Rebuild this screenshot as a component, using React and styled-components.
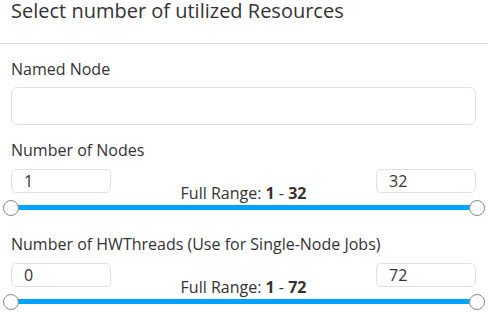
import React from "react";
import styled, { createGlobalStyle } from "styled-components";

const Global = createGlobalStyle`
  html, body { margin: 0; padding: 0; background: #fff; }
  body { font-family: "Open Sans", "Noto Sans", sans-serif; color: #333; }
  * { box-sizing: border-box; }
`;

const Panel = styled.div`
  width: 488px;
  height: 312px;
  overflow: hidden;
  background: #fff;
`;

const Header = styled.div`
  padding: 0 11px;
  height: 44px;
  border-bottom: 1px solid #dee2e6;
`;

const Title = styled.h5`
  margin: 0;
  font-size: 20px;
  line-height: 22px;
  font-weight: 500;
  color: #333;
`;

const Body = styled.div`
  padding: 13px 12px 0 11px;
  display: flex;
  flex-direction: column;
`;

const Group = styled.div`
  display: flex;
  flex-direction: column;
  margin-bottom: ${(p) => p.$mb || 0}px;
`;

const Label = styled.label`
  font-size: 16px;
  line-height: 24px;
  font-weight: 500;
  color: #333;
  margin-bottom: ${(p) => p.$mb || 6}px;
`;

const TextInput = styled.input`
  height: 38px;
  width: 100%;
  border: 1px solid #dee2e6;
  border-radius: 6px;
  padding: 0 12px;
  font: inherit;
  font-size: 16px;
  color: #333;
  outline: none;
`;

const RangeRow = styled.div`
  display: flex;
  justify-content: space-between;
  align-items: flex-start;
  height: 36px;
`;

const NumInput = styled.input`
  width: 100px;
  height: 24px;
  border: 1px solid #dee2e6;
  border-radius: 5px;
  padding: 0 12px;
  font: inherit;
  font-size: 16px;
  line-height: 22px;
  color: #333;
  outline: none;
`;

const RangeText = styled.div`
  align-self: flex-end;
  font-size: 16px;
  line-height: 24px;
  font-weight: 500;
  color: #333;
  b { font-weight: 700; }
`;

const Slider = styled.div`
  position: relative;
  height: 5px;
  margin-right: -1px;
  background: #00a3ff;
`;

const Thumb = styled.span`
  position: absolute;
  top: 50%;
  width: 16px;
  height: 16px;
  margin: -8px 0 0 -8px;
  border-radius: 50%;
  background: #fff;
  border: 1px solid #888;
`;

function RangeGroup({ label, min, max, lo, hi, mb }) {
  const pct = (v) => ((v - min) / (max - min)) * 100;
  const loPct = lo <= min ? 0 : pct(lo);
  return (
    <Group $mb={mb}>
      <Label $mb={7}>{label}</Label>
      <RangeRow>
        <NumInput defaultValue={lo} />
        <RangeText>
          Full Range: <b>{min}</b> - <b>{max}</b>
        </RangeText>
        <NumInput defaultValue={hi} />
      </RangeRow>
      <Slider>
        <Thumb style={{ left: `${loPct}%` }} />
        <Thumb style={{ left: `${pct(hi)}%` }} />
      </Slider>
    </Group>
  );
}

export default function App() {
  return (
    <Panel>
      <Global />
      <Header>
        <Title>Select number of utilized Resources</Title>
      </Header>
      <Body>
        <Group $mb={13}>
          <Label>Named Node</Label>
          <TextInput />
        </Group>
        <RangeGroup label="Number of Nodes" min={1} max={32} lo={1} hi={32} mb={22} />
        <RangeGroup
          label="Number of HWThreads (Use for Single-Node Jobs)"
          min={1}
          max={72}
          lo={0}
          hi={72}
        />
      </Body>
    </Panel>
  );
}
